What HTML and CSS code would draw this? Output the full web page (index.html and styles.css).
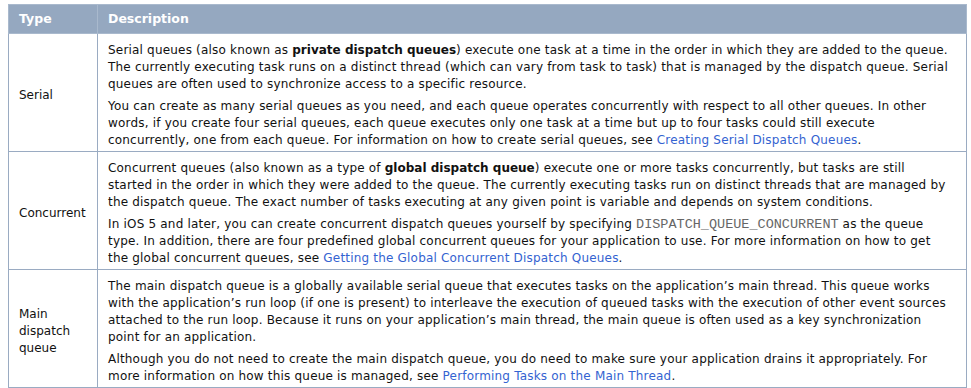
FILE: index.html
```html
<!DOCTYPE html>
<html>
<head>
<meta charset="utf-8">
<link rel="stylesheet" href="styles.css">
</head>
<body>
<table class="gcd">
  <thead>
    <tr><th class="c-type">Type</th><th class="c-desc">Description</th></tr>
  </thead>
  <tbody>
    <tr>
      <td class="c-type">Serial</td>
      <td class="c-desc">
        <p>Serial queues (also known as <b>private dispatch queues</b>) execute one task at a time in the order in which they are added to the queue.<br>The currently executing task runs on a distinct thread (which can vary from task to task) that is managed by the dispatch queue. Serial<br>queues are often used to synchronize access to a specific resource.</p>
        <p>You can create as many serial queues as you need, and each queue operates concurrently with respect to all other queues. In other<br>words, if you create four serial queues, each queue executes only one task at a time but up to four tasks could still execute<br>concurrently, one from each queue. For information on how to create serial queues, see <a href="#">Creating Serial Dispatch Queues</a>.</p>
      </td>
    </tr>
    <tr>
      <td class="c-type">Concurrent</td>
      <td class="c-desc">
        <p>Concurrent queues (also known as a type of <b>global dispatch queue</b>) execute one or more tasks concurrently, but tasks are still<br>started in the order in which they were added to the queue. The currently executing tasks run on distinct threads that are managed by<br>the dispatch queue. The exact number of tasks executing at any given point is variable and depends on system conditions.</p>
        <p>In iOS 5 and later, you can create concurrent dispatch queues yourself by specifying <code>DISPATCH_QUEUE_CONCURRENT</code> as the queue<br>type. In addition, there are four predefined global concurrent queues for your application to use. For more information on how to get<br>the global concurrent queues, see <a href="#">Getting the Global Concurrent Dispatch Queues</a>.</p>
      </td>
    </tr>
    <tr>
      <td class="c-type">Main dispatch queue</td>
      <td class="c-desc">
        <p>The main dispatch queue is a globally available serial queue that executes tasks on the application’s main thread. This queue works<br>with the application’s run loop (if one is present) to interleave the execution of queued tasks with the execution of other event sources<br>attached to the run loop. Because it runs on your application’s main thread, the main queue is often used as a key synchronization<br>point for an application.</p>
        <p>Although you do not need to create the main dispatch queue, you do need to make sure your application drains it appropriately. For<br>more information on how this queue is managed, see <a href="#">Performing Tasks on the Main Thread</a>.</p>
      </td>
    </tr>
  </tbody>
</table>
</body>
</html>
```
FILE: styles.css
```css
html, body { margin: 0; padding: 0; background: #fff; }
body {
  padding: 4px 5px 0 8px;
  font-family: "DejaVu Sans", Verdana, sans-serif;
  font-size: 12px;
  line-height: 17px;
  color: #111;
}
.gcd {
  border-collapse: collapse;
  width: 959px;
  border: 1px solid #9aabc2;
}
.gcd th {
  background: #95a8c0;
  color: #fff;
  font-weight: bold;
  text-align: left;
  height: 28px;
  padding: 0 10px;
  border: 1px solid #a9b9cd;
  font-size: 12.5px;
  line-height: 16px;
}
.gcd td {
  border: 1px solid #9aabc2;
  padding: 8px 10px 2px 10px;
  vertical-align: top;
}
.gcd td.c-desc { letter-spacing: 0.19px; }
.gcd td.c-type {
  vertical-align: middle;
  width: 68px;
}
.gcd p { margin: 0; white-space: nowrap; }
.gcd p + p { margin-top: 5px; }
.gcd b { font-weight: bold; letter-spacing: 0; }
.gcd a { color: #3463d1; text-decoration: none; }
.gcd code {
  font-family: "Liberation Mono", "Courier New", monospace;
  font-size: 13.5px;
  line-height: 1;
  letter-spacing: 0;
  color: #666;
}
```
